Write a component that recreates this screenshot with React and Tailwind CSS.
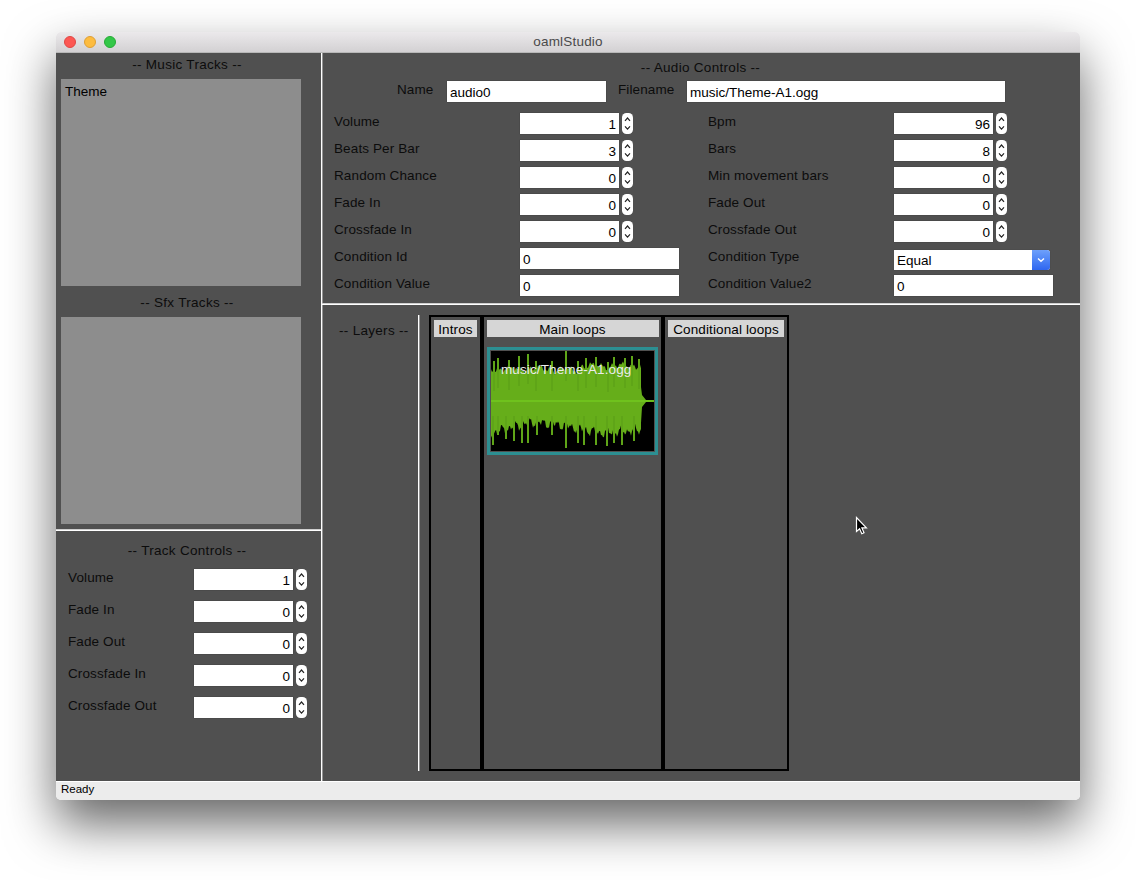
const labelFont = "font-['Liberation_Sans',Arial,sans-serif]";

function Spinner() {
  return (
    <svg width="11" height="21" viewBox="0 0 11 21" className="shrink-0 ml-[3px]">
      <rect x="0" y="0" width="11" height="21" rx="4.5" fill="#fff" />
      <path d="M3 7.8 5.5 5 8 7.8" fill="none" stroke="#222" strokeWidth="1.2" />
      <path d="M3 13.4 5.5 16.2 8 13.4" fill="none" stroke="#222" strokeWidth="1.2" />
    </svg>
  );
}

function Field({ value, w = "w-[99px]", align = "text-right" }) {
  return (
    <div className={`${w} ${align} h-[21px] bg-white px-[3px] text-[13.5px] leading-[23px] text-black shadow-[0_0_1px_#333] shrink-0`}>
      {value}
    </div>
  );
}

function Label({ children, w }) {
  return <div className={`${w} h-[21px] leading-[17px] text-[13.5px] text-[#0c0c0c] shrink-0 tracking-[0.12px]`}>{children}</div>;
}

function SpinRow({ label, value, labelW = "w-[186px]", h = "h-[27px]" }) {
  return (
    <div className={`flex items-start ${h}`}>
      <Label w={labelW}>{label}</Label>
      <Field value={value} />
      <Spinner />
    </div>
  );
}

function TextRow({ label, value }) {
  return (
    <div className="flex items-start h-[27px]">
      <Label w="w-[186px]">{label}</Label>
      <Field value={value} w="w-[159px]" align="text-left" />
    </div>
  );
}

function Combo() {
  return (
    <div className="flex items-start h-[27px]">
      <Label w="w-[186px]">Condition Type</Label>
      <div className="flex w-[156px] h-[20px] mt-[2px] bg-white rounded-r-[3px] text-[13.5px] leading-[21px] text-black shadow-[0_0_1px_#333]">
        <div className="flex-1 px-[3px]">Equal</div>
        <div className="w-[18px] rounded-r-[3px] bg-gradient-to-b from-[#6ea0fb] to-[#2f66f0] flex items-center justify-center">
          <svg width="10" height="8" viewBox="0 0 10 8">
            <path d="M2 2.5 5 5.3 8 2.5" fill="none" stroke="#fff" strokeWidth="1.4" />
          </svg>
        </div>
      </div>
    </div>
  );
}

function Wave() {
  const topSpikes = [[2,10],[6,7],[17,9],[27,5],[36,3],[44,10],[60,10],[74,0],[86,10],[94,7],[104,6],[116,11],[122,6],[133,7],[140,5],[147,8]];
  const botSpikes = [[1,94],[6,84],[14,88],[22,90],[30,92],[36,92],[45,84],[60,84],[74,97],[86,92],[92,94],[104,94],[115,95],[122,92],[130,94],[142,90]];
  const up = [];
  const low = [];
  for (let x = 0; x <= 150; x += 1) {
    const n1 = Math.sin(x * 1.7) * 1.5 + Math.sin(x * 0.61) * 2 + Math.sin(x * 0.23) * 1.3;
    const n2 = Math.sin(x * 0.9 + 1) * 3 + Math.sin(x * 0.47) * 2.2 + Math.sin(x * 2.3) * 1.6;
    const top = x < 60 ? 18 : x < 90 ? 19 : 15;
    const env = x < 40 ? 82 - (x / 40) * 11 : x < 70 ? 71 + ((x - 40) / 30) * 3 : x < 110 ? 74 + ((x - 70) / 40) * 8 : 82 - ((x - 110) / 40) * 3;
    up.push([x, top + n1]);
    low.push([x, env + n2]);
  }
  const d =
    "M" +
    up.map((p) => p.join(" ")).join("L") +
    "L150 36L151 44L155 49L163 49.3L163 50.7L155 51L151 56L150 72L" +
    low
      .slice()
      .reverse()
      .map((p) => p.join(" "))
      .join("L") +
    "Z";
  return (
    <svg width="163" height="100" viewBox="0 0 163 100" className="block bg-black">
      <path d={d} fill="#66ae1a" />
      {topSpikes.map(([x, y]) => (
        <rect key={"t" + x} x={x} y={y} width="2" height="30" fill="#5fa518" />
      ))}
      {botSpikes.map(([x, y]) => (
        <rect key={"b" + x} x={x} y={65} width="2" height={y - 65} fill="#5fa518" />
      ))}
      <rect x="0" y="49.2" width="163" height="1.6" fill="#72c81f" />
    </svg>
  );
}

function Clip() {
  return (
    <div className="relative w-[171px] h-[108px] ml-[3px] mt-[10px] border-[3px] border-[#2c8f92]">
      <div className="border border-[#505050]">
        <Wave />
      </div>
      <div className="absolute left-[11px] top-[12px] text-[13.5px] leading-[16px] text-[#ececec] tracking-[0.12px] whitespace-nowrap">
        music/Theme-A1.ogg
      </div>
    </div>
  );
}

function LayerCol({ title, w, headerW, sep, children }) {
  return (
    <div className={`${w} ${sep ? "ml-[4px]" : ""} h-full bg-[#505050] pt-[3px] shrink-0`}>
      <div className={`${headerW} mx-auto h-[17px] bg-[#d6d6d6] text-[13.5px] leading-[19px] text-black text-center tracking-[0.12px] whitespace-nowrap`}>
        {title}
      </div>
      {children}
    </div>
  );
}

function Divider() {
  return <div className="h-[2px] bg-white border-t border-[#cfcfcf] shrink-0" />;
}

export default function App() {
  const leftCol = [
    ["Volume", 1],
    ["Beats Per Bar", 3],
    ["Random Chance", 0],
    ["Fade In", 0],
    ["Crossfade In", 0],
  ];
  const rightCol = [
    ["Bpm", 96],
    ["Bars", 8],
    ["Min movement bars", 0],
    ["Fade Out", 0],
    ["Crossfade Out", 0],
  ];
  const track = [
    ["Volume", 1],
    ["Fade In", 0],
    ["Fade Out", 0],
    ["Crossfade In", 0],
    ["Crossfade Out", 0],
  ];
  return (
    <div className={`w-[1136px] h-[880px] bg-white overflow-hidden pt-[32px] pl-[56px] ${labelFont}`}>
      <div className="relative w-[1024px] h-[768px] flex flex-col rounded-[5px] overflow-hidden shadow-[0_24px_50px_0_rgba(0,0,0,0.6)]">
        <div className="h-[21px] shrink-0 flex items-center bg-gradient-to-b from-[#ebe9eb] to-[#d3d1d3] border-b border-[#b8b8b8] relative pl-[8px]">
          <div className="flex gap-[8px]">
            <span className="w-[12px] h-[12px] rounded-full bg-[#fc5753] border border-[#df4744]" />
            <span className="w-[12px] h-[12px] rounded-full bg-[#fdbc40] border border-[#de9f34]" />
            <span className="w-[12px] h-[12px] rounded-full bg-[#33c748] border border-[#27aa35]" />
          </div>
          <div className="flex-1 text-center text-[13.5px] text-[#4a4a4a] pr-[60px] tracking-[0.2px]">oamlStudio</div>
        </div>

        <div className="flex flex-1 min-h-0 bg-[#505050]">
          <div className="w-[265px] shrink-0 flex flex-col">
            <div className="h-[26px] text-center text-[13.5px] text-[#0c0c0c] leading-[23px] tracking-[0.3px] pr-[3px]">-- Music Tracks --</div>
            <div className="ml-[5px] w-[240px] h-[207px] bg-[#8d8d8d] px-[4px] pt-[5px] text-[13.5px] leading-[16px] text-black">Theme</div>
            <div className="h-[31px] text-center text-[13.5px] text-[#0c0c0c] leading-[34px] tracking-[0.3px] pr-[3px]">-- Sfx Tracks --</div>
            <div className="ml-[5px] w-[240px] h-[207px] bg-[#8d8d8d]" />
            <div className="h-[5px]" />
            <Divider />
            <div className="h-[38px] text-center text-[13.5px] text-[#0c0c0c] leading-[39px] tracking-[0.3px] pr-[3px]">-- Track Controls --</div>
            <div className="pl-[12px]">
              {track.map(([l, v]) => (
                <SpinRow key={l} label={l} value={v} labelW="w-[126px]" h="h-[32px]" />
              ))}
            </div>
          </div>

          <div className="w-[1px] bg-white shrink-0 shadow-[1px_0_0_rgba(255,255,255,0.4)]" />

          <div className="flex-1 min-w-0 flex flex-col">
            <div className="h-[250px] shrink-0">
              <div className="h-[28px] text-center text-[13.5px] text-[#0c0c0c] leading-[29px] tracking-[0.3px] pr-[1px]">-- Audio Controls --</div>
              <div className="flex items-start h-[32px]">
                <div className="ml-[75px] w-[50px] text-[13.5px] leading-[17px] text-[#0c0c0c] tracking-[0.12px]">Name</div>
                <Field value="audio0" w="w-[159px]" align="text-left" />
                <div className="ml-[12px] w-[69px] text-[13.5px] leading-[17px] text-[#0c0c0c] tracking-[0.12px]">Filename</div>
                <Field value="music/Theme-A1.ogg" w="w-[318px]" align="text-left" />
              </div>
              <div className="pl-[12px] grid grid-cols-[374px_1fr]">
                {leftCol.map(([l, v], i) => (
                  <div key={l} className="contents">
                    <SpinRow label={l} value={v} />
                    <SpinRow label={rightCol[i][0]} value={rightCol[i][1]} />
                  </div>
                ))}
                <TextRow label="Condition Id" value="0" />
                <Combo />
                <TextRow label="Condition Value" value="0" />
                <TextRow label="Condition Value2" value="0" />
              </div>
            </div>
            <Divider />
            <div className="flex-1 min-h-0 flex items-start pt-[10px]">
              <div className="w-[96px] pl-[17px] shrink-0 text-[13.5px] leading-[31px] text-[#0c0c0c] tracking-[0.3px] whitespace-nowrap">-- Layers --</div>
              <div className="w-[1px] h-[456px] bg-white shrink-0 shadow-[1px_0_0_rgba(255,255,255,0.4)]" />
              <div className="ml-[10px] h-[456px] flex bg-black p-[2px]">
                <LayerCol title="Intros" w="w-[49px]" headerW="w-[43px]" />
                <LayerCol title="Main loops" w="w-[177px]" headerW="w-[172px]" sep>
                  <Clip />
                </LayerCol>
                <LayerCol title="Conditional loops" w="w-[122px]" headerW="w-[116px]" sep />
              </div>
            </div>
          </div>
        </div>

        <div className="h-[19px] shrink-0 bg-[#ececec] border-t border-white pl-[5px] text-[11.5px] leading-[15px] text-black">Ready</div>

        <svg width="14" height="20" viewBox="0 0 14 20" className="absolute left-[799px] top-[484px]">
          <path d="M1.5 1.5V15.5L4.6 12.7 6.8 17.8 9 16.8 6.9 11.9H11.4Z" fill="#000" stroke="#fff" strokeWidth="1.2" />
        </svg>
      </div>
    </div>
  );
}
